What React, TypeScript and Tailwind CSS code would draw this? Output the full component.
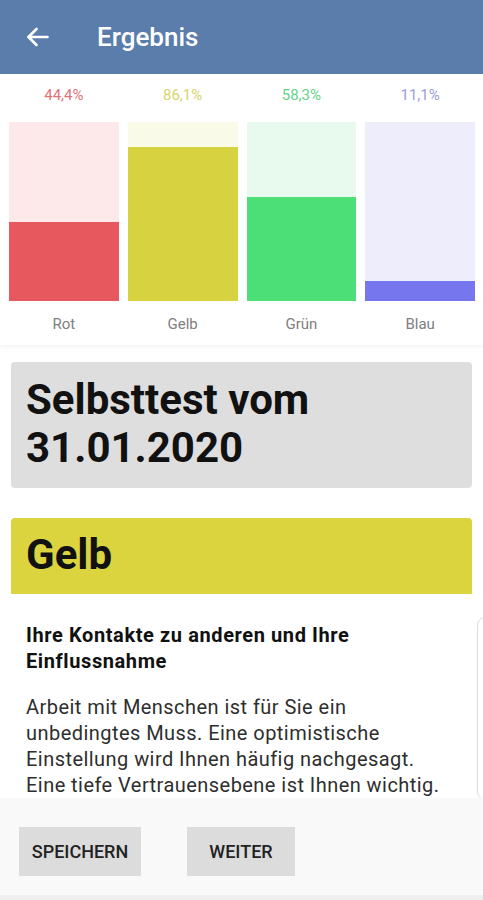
import React from "react";

const bars = [
  { label: "Rot", pct: "44,4%", v: 44.4, text: "text-[#e27379]", light: "bg-[#fde9e9]", dark: "bg-[#e6585e]" },
  { label: "Gelb", pct: "86,1%", v: 86.1, text: "text-[#d9d66a]", light: "bg-[#fafae8]", dark: "bg-[#d7d240]" },
  { label: "Grün", pct: "58,3%", v: 58.3, text: "text-[#66d28a]", light: "bg-[#e8f9ee]", dark: "bg-[#4ddf77]" },
  { label: "Blau", pct: "11,1%", v: 11.1, text: "text-[#9d9ddd]", light: "bg-[#ededfc]", dark: "bg-[#7676ee]" },
];

export default function App() {
  return (
    <div
      className="h-[900px] w-[483px] flex flex-col bg-white overflow-hidden"
      style={{ fontFamily: "Roboto, 'Noto Sans', sans-serif" }}
    >
      <header className="h-[74px] shrink-0 bg-[#5a7dab] flex items-center">
        <div className="w-[97px] pl-[26px] flex items-center">
          <svg width="23" height="20" viewBox="0 0 23 20" fill="none" stroke="white" strokeWidth="2.6" strokeLinecap="round" strokeLinejoin="round">
            <path d="M21.5 10H2.5" />
            <path d="M10.5 2L2.5 10L10.5 18" />
          </svg>
        </div>
        <span className="text-white text-[26px] font-medium leading-none">Ergebnis</span>
      </header>

      <main className="relative flex-1 overflow-hidden">
        <section className="pt-[12px] pb-[12px] pl-[9px] pr-[8px] shadow-[0_2px_4px_rgba(0,0,0,0.05)]">
          <div className="grid grid-cols-4 gap-[9px]">
            {bars.map((b) => (
              <div key={b.label} className="flex flex-col items-center">
                <div className={`text-[15px] leading-[18px] ${b.text}`}>{b.pct}</div>
                <div className={`mt-[18px] w-full h-[179px] flex flex-col justify-end ${b.light}`}>
                  <div className={`w-full ${b.dark}`} style={{ height: `${b.v}%` }} />
                </div>
                <div className="mt-[14px] text-[15px] leading-[18px] text-[#808080]">{b.label}</div>
              </div>
            ))}
          </div>
        </section>

        <div className="mt-[17px] mx-[11px] rounded-[4px] bg-[#dedede] pt-[14px] pb-[16px] px-[15px]">
          <h1 className="text-[42px] leading-[48px] font-bold text-[#111]">
            Selbsttest vom
            <br />
            31.01.2020
          </h1>
        </div>

        <div className="mt-[30px] mx-[11px] rounded-t-[4px] bg-[#dbd43f] pt-[13px] pb-[15px] px-[15px]">
          <h2 className="text-[42px] leading-[48px] font-bold text-[#111]">Gelb</h2>
        </div>

        <div className="pl-[26px] pr-[35px] pt-[28px]">
          <h3 className="text-[20px] leading-[26px] font-bold tracking-[0.6px] text-[#111]">
            Ihre Kontakte zu anderen und Ihre Einflussnahme
          </h3>
          <p className="mt-[20px] text-[20px] leading-[26px] tracking-[0.45px] text-[#2e2e2e]">
            Arbeit mit Menschen ist für Sie ein unbedingtes Muss. Eine optimistische Einstellung wird Ihnen häufig nachgesagt. Eine tiefe Vertrauensebene ist Ihnen wichtig.
          </p>
        </div>

        <div className="absolute left-[477px] top-[543px] w-[20px] h-[183px] rounded-lg border border-[#dcdcdc] bg-white" />
      </main>

      <footer className="h-[102px] shrink-0 bg-[#f9f9f9] border-b-[5px] border-[#efefef] flex items-start pt-[29px] pl-[19px] gap-[46px]">
        <button className="h-[49px] w-[122px] bg-[#dcdcdc] text-[18px] font-medium text-[#222] uppercase">
          Speichern
        </button>
        <button className="h-[49px] w-[108px] bg-[#dcdcdc] text-[18px] font-medium text-[#222] uppercase">
          Weiter
        </button>
      </footer>
    </div>
  );
}
